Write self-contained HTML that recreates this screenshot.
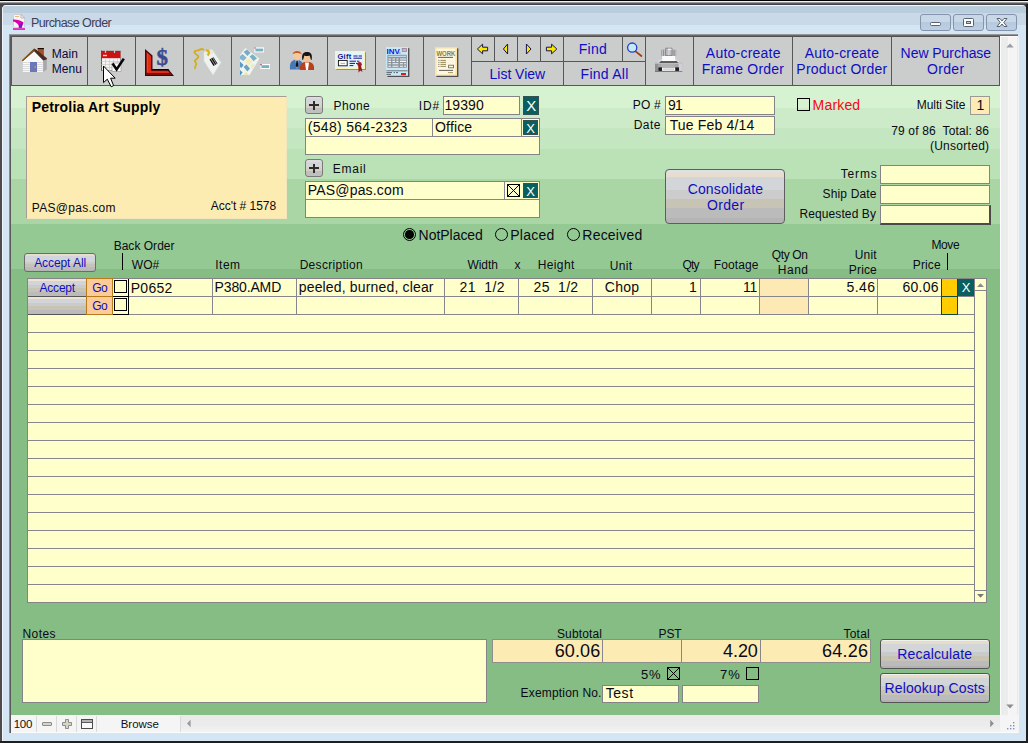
<!DOCTYPE html>
<html><head><meta charset="utf-8"><title>Purchase Order</title>
<style>
html,body{margin:0;padding:0}
html{background:#1f1f1f}
body{width:1028px;height:743px;position:relative;overflow:hidden;background:#1f1f1f;font-family:"Liberation Sans",sans-serif}
.t{position:absolute;line-height:20px;white-space:pre;font-family:"Liberation Sans",sans-serif}
.a{position:absolute;box-sizing:border-box}
.sep{position:absolute;width:1px;background:#565858;top:37px;height:48px}
.fld{position:absolute;box-sizing:border-box;border:1px solid #848488;background:#ffffcc}
.tan{background:#fdebb4}
.xb{position:absolute;box-sizing:border-box;background:#07605f;border:1px solid #35504f}
.ln{position:absolute;background:#86868c}
.btn{position:absolute;box-sizing:border-box;border:1px solid #5e5e5e;border-radius:4px}
.cb{position:absolute;box-sizing:border-box;border:1px solid #000;width:13px;height:13px}
.rad{position:absolute;box-sizing:border-box;border:1.15px solid #000;border-radius:50%;width:13px;height:13px}
svg{position:absolute;overflow:visible}

</style></head>
<body>
<!-- outer frame -->
<div class="a" style="left:0;top:0;width:1028px;height:1px;background:#000"></div>
<div class="a" style="left:0;top:1px;width:1028px;height:1px;background:#f2f2f2"></div>
<div class="a" style="left:0;top:2px;width:1028px;height:1px;background:#9a9a9a"></div>
<div class="a" style="left:0;top:3px;width:1028px;height:1px;background:#5c5c5c"></div>
<div class="a" style="left:0;top:4px;width:1028px;height:739px;background:#1f1f1f"></div>
<div class="a" style="left:0;top:4px;width:2px;height:737px;background:#4c4c4e"></div>
<div class="a" style="left:0;top:4px;width:1026px;height:2px;background:#444446"></div>
<div class="a" style="left:2px;top:5px;width:1024px;height:736px;background:#d4e5f3;border-radius:4px 4px 0 0;border-top:1px solid #f4f8fb;border-left:1px solid #eef4fa"></div>
<div class="a" style="left:1018px;top:37px;width:1px;height:696px;background:#f2f4f6"></div>
<div class="a" style="left:3px;top:6px;width:1023px;height:7px;background:#bacddd;border-radius:3px 3px 0 0"></div>
<div class="a" style="left:3px;top:13px;width:1023px;height:12px;background:#c9d9e8"></div>
<!-- title icon -->
<svg style="left:13px;top:14px" width="12" height="16" viewBox="0 0 12 16">
<path d="M0.5 0.5H8L11.5 4V13.6H0.5Z" fill="#f6f6f4" stroke="#d0d0d4" stroke-width="1"/>
<path d="M8 0.5V4H11.5Z" fill="#fff" stroke="#a4a4ac" stroke-width="0.8"/>
<path d="M2 2.5H6" stroke="#ecb878" stroke-width="1"/>
<path d="M0 5.6C4 5.4 8 6.6 10.6 8.4L8.6 13.8H5.8C6.4 10.4 3.4 8.2 0 7.4Z" fill="#dc00ac"/>
<path d="M6.2 10.2C7.4 10 9 9.4 9.8 8.6L8.6 13.8H5.8C6 12.6 6.4 11.4 6.2 10.2Z" fill="#7418cc"/>
<rect x="0" y="14.3" width="12" height="1.5" fill="#e400b4"/>
</svg>
<!-- window buttons -->
<div class="a" style="left:920px;top:14px;width:31px;height:17px;border:1px solid #8494ae;border-radius:3px;background:linear-gradient(#c9d8e8 0,#c9d8e8 45%,#b6cadf 46%,#bccfe2 100%)"></div>
<div class="a" style="left:953px;top:14px;width:31px;height:17px;border:1px solid #8494ae;border-radius:3px;background:linear-gradient(#c9d8e8 0,#c9d8e8 45%,#b6cadf 46%,#bccfe2 100%)"></div>
<div class="a" style="left:986px;top:14px;width:31px;height:17px;border:1px solid #8494ae;border-radius:3px;background:linear-gradient(#c9d8e8 0,#c9d8e8 45%,#b6cadf 46%,#bccfe2 100%)"></div>
<svg style="left:920px;top:14px" width="97" height="17" viewBox="0 0 97 17">
<rect x="10.5" y="8.5" width="10" height="3" rx="1" fill="#fdfdfd" stroke="#5a6270" stroke-width="1"/>
<rect x="43.5" y="4.5" width="10" height="8" rx="1" fill="#fdfdfd" stroke="#5a6270" stroke-width="1"/>
<rect x="46.5" y="7.5" width="4" height="2" fill="#c0d0e2" stroke="#5a6270" stroke-width="1"/>
<path d="M77 4.5H80L82 7L84 4.5H87L83.8 8.5L87 12.5H84L82 10L80 12.5H77L80.2 8.5Z" fill="#fdfdfd" stroke="#5a6270" stroke-width="1" stroke-linejoin="round"/>
</svg>
<!-- client top/left dark borders -->
<div class="a" style="left:9px;top:34px;width:1009px;height:1px;background:#9a9696"></div>
<div class="a" style="left:9px;top:35px;width:1009px;height:1px;background:#6a686a"></div>
<div class="a" style="left:9px;top:36px;width:1009px;height:1px;background:#505252"></div>
<div class="a" style="left:9px;top:35px;width:1px;height:698px;background:#8c8c8c"></div>
<div class="a" style="left:10px;top:36px;width:1px;height:697px;background:#5a5a5a"></div>
<!-- toolbar -->
<div class="a" style="left:11px;top:37px;width:989px;height:49px;background:#cbcdcc;border-left:1px solid #565858;border-right:1px solid #565858;border-bottom:1px solid #565858"></div>
<div class="sep" style="left:87px"></div><div class="sep" style="left:135px"></div><div class="sep" style="left:183px"></div>
<div class="sep" style="left:231px"></div><div class="sep" style="left:279px"></div><div class="sep" style="left:327px"></div>
<div class="sep" style="left:375px"></div><div class="sep" style="left:423px"></div><div class="sep" style="left:471px"></div>
<div class="sep" style="left:494px;height:24px"></div><div class="sep" style="left:517px;height:24px"></div><div class="sep" style="left:540px;height:24px"></div>
<div class="sep" style="left:563px"></div><div class="sep" style="left:622px;height:24px"></div><div class="sep" style="left:645px"></div>
<div class="sep" style="left:693px"></div><div class="sep" style="left:792px"></div><div class="sep" style="left:891px"></div>
<div class="a" style="left:471px;top:61px;width:175px;height:1px;background:#565858"></div>
<svg style="left:0;top:0" width="1028" height="100" viewBox="0 0 1028 100">
<!-- house -->
<g>
<rect x="37.7" y="48" width="6.2" height="9" fill="#a85228"/><rect x="37.7" y="48" width="6.2" height="1.2" fill="#1a0a08"/>
<path d="M22.9 60L34 50L43.2 60V72H22.9Z" fill="#f8f8f8"/>
<path d="M43.2 59L46.8 58V69.5L43.2 72Z" fill="#a8a8ac"/>
<path d="M23 62.5H43M23 64.5H43M23 66.5H43M23 68.5H43M23 70.5H43" stroke="#d4d4d8" stroke-width="0.8"/>
<rect x="30" y="62" width="7" height="10" fill="#6a78b8"/><rect x="34.6" y="66.3" width="1.2" height="1.2" fill="#d8c040"/>
<path d="M21.8 60.4L34.2 48.6L36 49.5L47.2 58.4L46.4 59.6L43.2 60.6L34.2 51.2L23.2 60.8Z" fill="#4a2a22"/>
<path d="M21.8 60.4L34.2 48.6L34.6 50L23 60.9Z" fill="#8a5a18"/>
</g>
<!-- calendar -->
<g>
<rect x="101.4" y="51" width="19" height="19.6" fill="#f4f4f4" stroke="#8c8c90" stroke-width="0.8"/><rect x="101" y="50.6" width="1" height="20" fill="#5c5c60"/>
<rect x="101.4" y="51" width="19" height="7.2" fill="#cc1212"/>
<rect x="103" y="54.8" width="4" height="1.4" fill="#f6d0d0"/>
<path d="M105.5 49.5V53M114.5 49.5V53" stroke="#c8c8cc" stroke-width="1.2"/>
<path d="M101.5 61.5H120M101.5 64.5H120M101.5 67.5H120M105.5 58.5V71M109.5 58.5V71M113.5 58.5V71M117.5 58.5V71" stroke="#d0ccc4" stroke-width="0.8"/>
<rect x="112" y="63" width="9" height="8.5" fill="#fbfbfb" stroke="#9a9aa0" stroke-width="0.7"/>
<path d="M112.6 63.6L116.6 69.4L123.8 58.6" fill="none" stroke="#080808" stroke-width="2.6"/>
</g>
<!-- frame corner & $ -->
<g>
<path d="M145 49L152.5 55.6V68.9H168.2L174 75.9H145Z" fill="#3c0814"/>
<path d="M146.5 51.8L151 56V70.6H167.8L170 73.2H146.5Z" fill="#e02c14"/>
<path d="M146.5 73.2H170.2L172.2 75H146.5Z" fill="#7c1010"/>
<path d="M152.5 69H168.2L169.6 70.6H151.2Z" fill="#0c0404"/>
<path d="M147.6 54V72" stroke="#f04828" stroke-width="1"/>
<text x="156.6" y="65.4" font-family="Liberation Serif" font-weight="700" font-size="23" fill="#3c4a8e" stroke="#3c4a8e" stroke-width="0.5">$</text>
</g>
<!-- tag -->
<g>
<path d="M204 52L212 49.5L221 62.5L213 75L204 61Z" fill="#f0f2f0" stroke="#d8e0e0" stroke-width="0.6"/>
<path d="M205 51.5L211.6 49.6L214 53L206.4 56Z" fill="#e8ecd0"/>
<path d="M206 50.5C209 50 210 53 207.6 55.5" fill="none" stroke="#d8b020" stroke-width="2.2"/>
<path d="M204 50.2C201.4 47 200 50.6 196.6 50.6C193 50.6 194.6 53.8 197 55C200 56.4 197.4 58.6 195.4 60C193.4 61.4 197.6 63 196 65C194.6 66.8 194.6 67.8 195.2 69" fill="none" stroke="#d4ac1c" stroke-width="1.8"/>
<path d="M209.5 59.5L213.5 57.2L217.5 63.6L213.5 66Z" fill="#101010"/>
<path d="M211 58.8L215 65.2M212.8 57.8L216.6 64.2" stroke="#f0f0f0" stroke-width="0.6"/>
</g>
<!-- mat samples -->
<g>
<path d="M245.4 48L259.4 58.6L249.6 75H240V55Z" fill="#f0f4ec"/>
<path d="M243.6 52L247 49.6L250.6 52.8L247.4 56Z" fill="#78acc4"/>
<path d="M240 56L242.6 54L246.6 57.8L243.4 61L240 59Z" fill="#88b4cc"/>
<path d="M249.6 56.4L252.6 54.2L257 58.2L253.6 61.2Z" fill="#78b0c8"/>
<path d="M244.6 61.6L248.6 58L252.6 61.6L248.6 65.4Z" fill="#f4ecb8"/>
<path d="M240 61.6L243.6 65L241.4 68L240 67Z" fill="#5c9cc8"/>
<path d="M243.6 67L246.4 64.6L250 68.6L247.4 71.4Z" fill="#6ca4c0"/>
<path d="M240 70L242.6 72.4L240.6 75H240Z" fill="#4c98c4"/>
<path d="M250.4 65.4L253 63.2L255.4 65.4L252 69.6Z" fill="#e8ecd0"/>
<path d="M243.4 74.8L246 72L248.8 74.8Z" fill="#f0e4a8"/>
<rect x="254.4" y="47.4" width="9.6" height="5" fill="#fff"/><rect x="255.4" y="48.6" width="7.8" height="2.8" fill="#78b0c4"/>
<rect x="260.4" y="64" width="9.6" height="5" fill="#fff"/><rect x="261.4" y="65.2" width="7.8" height="2.8" fill="#78b0c4"/>
<path d="M254.4 47.4h1.2v1.2h-1.2zM260.4 64h1.2v1.2h-1.2z" fill="#8c2048"/>
</g>
<!-- people -->
<g>
<path d="M290 69.4C289.4 63 291 60 296.6 59.4C302 60 303.4 63 303 69.4Z" fill="#4878b8"/>
<path d="M295.4 59.6L297 69.4L298.6 59.6Z" fill="#f4f4f4"/>
<path d="M296.4 60.4H297.8L298.2 66L297 67.4L295.8 66Z" fill="#101010"/>
<ellipse cx="297" cy="55" rx="4.2" ry="4.6" fill="#f4c8a0"/>
<path d="M292.6 54.4C292.4 50 301.4 49.6 301.6 54.4C300 52.4 294 52.4 292.6 54.4Z" fill="#c85a20"/>
<path d="M300 70C299.4 64.4 301.6 62 307 61.8C312.4 62 314.6 64.4 314 70Z" fill="#b8401c"/>
<path d="M305 62.4L306 70H308L309 62.4Z" fill="#fbfbfb"/>
<ellipse cx="307" cy="57.6" rx="3.4" ry="4" fill="#f4c090"/>
<path d="M302.4 60C301 53.4 304.4 52 307 52C309.8 52 313 53.4 311.6 60C310.4 60 310.6 56.4 309.4 55.4C307.4 56.2 305.4 56 304.4 55.4C303.6 56.6 303.8 60 302.4 60Z" fill="#141414"/>
</g>
<!-- gift certificate -->
<g>
<rect x="336.4" y="52.4" width="29.6" height="17.6" fill="#8c8c90"/>
<rect x="335" y="51" width="30" height="18" fill="#fbf4b8"/>
<rect x="336.2" y="52.2" width="27.6" height="15.6" fill="#e4f4fc"/>
<text x="337.4" y="58.8" font-family="Liberation Sans" font-weight="700" font-size="7.6" fill="#141490" letter-spacing="0.3">Gift</text>
<path d="M353.4 56H357.6M358.6 56H362M353.4 58.2H362M349.6 61.2H356M357 61.2H359.4M349.6 63.4H355M356 63.4H358M349.6 65.6H353.4" stroke="#141490" stroke-width="1"/>
<rect x="338.4" y="60.4" width="8.8" height="5.4" fill="#fbfbfb" stroke="#101010" stroke-width="0.9"/>
<path d="M340.6 63.4H345" stroke="#9a9a9a" stroke-width="0.8"/>
<circle cx="359.6" cy="64.2" r="2.2" fill="#a81c1c"/>
<path d="M358.2 65.6L358.6 72.8L360.2 70.4L362.4 72L361 65.6Z" fill="#981818"/>
</g>
<!-- INV -->
<g>
<rect x="387.4" y="48.2" width="22" height="28.8" fill="#505054"/>
<rect x="386" y="47" width="22" height="28.8" fill="#c8e8f6"/>
<text x="386.6" y="54.4" font-family="Liberation Sans" font-weight="700" font-size="8" fill="#1010e0">INV</text>
<path d="M398.4 53H400.6" stroke="#4858a8" stroke-width="0.8"/>
<rect x="402.2" y="48.4" width="4.4" height="3.2" fill="#f0a0c8" stroke="#80808c" stroke-width="0.7"/>
<rect x="387.4" y="54.8" width="19.4" height="13" fill="#8c949c"/>
<path d="M388.4 56.4H406" stroke="#c0d8e8" stroke-width="1.2"/>
<path d="M388.4 59H391M392.4 59H395M396.4 59H398.4M400 59H406M388.4 61.4H391M392.4 61.4H395M396.4 61.4H398.4M400 61.4H406M388.4 63.8H391M392.4 63.8H398.4M400 63.8H403M404 63.8H406M388.4 66.2H391M392.4 66.2H398.4M400 66.2H403M404 66.2H406" stroke="#f4f8fc" stroke-width="1.1"/>
<path d="M386.4 70.8H407.6" stroke="#50545c" stroke-width="0.8"/>
<path d="M386.4 72.6H392M393.6 72.6H395M396 72.6H398M386.4 74.4H391" stroke="#50545c" stroke-width="0.9"/>
<rect x="401" y="73" width="5" height="2.2" fill="#e81818"/>
</g>
<!-- WORK -->
<g>
<rect x="436.4" y="48.4" width="22" height="28.6" fill="#505054"/>
<rect x="435" y="47.2" width="22" height="28.6" fill="#fbe4a4"/>
<rect x="436.6" y="48.6" width="18.8" height="25.8" fill="#fdf6e0"/>
<text x="436.4" y="55.6" font-family="Liberation Sans" font-weight="700" font-size="7" fill="#8c7c38" textLength="19" lengthAdjust="spacingAndGlyphs">WORK</text>
<path d="M438 57.4H453" stroke="#50504c" stroke-width="0.9"/>
<path d="M440.4 60.4H446M440.4 62.4H446M440.4 64.4H446M440.4 66.4H446" stroke="#8c8048" stroke-width="0.9"/>
<path d="M438.4 60.4h1M438.4 62.4h1M438.4 64.4h1M438.4 66.4h1" stroke="#50504c" stroke-width="0.9"/>
<rect x="448.6" y="65.2" width="5" height="2.6" fill="#fdf6e0" stroke="#70684c" stroke-width="0.8"/>
<path d="M439 70.4H453" stroke="#50504c" stroke-width="0.9"/>
<path d="M448 72.6H453" stroke="#8c8048" stroke-width="0.8"/>
</g>
<!-- arrows -->
<g fill="#ffe800" stroke="#141450" stroke-width="1" stroke-linejoin="miter">
<path d="M477.4 49L482.6 44.2V47.2H487.6V50.8H482.6V53.8Z"/>
<path d="M503.4 49L507.6 44V54Z"/>
<path d="M531 49L526.4 44V54Z"/>
<path d="M556.8 49L551.6 44.2V47.2H546.4V50.8H551.6V53.8Z"/>
</g>
<!-- magnifier -->
<path d="M635.6 51.4L641.4 56" stroke="#a03c1c" stroke-width="1.8" stroke-linecap="round"/>
<circle cx="632.2" cy="47.6" r="4.6" fill="#c8e8f8" stroke="#2040c4" stroke-width="1.3"/>
<!-- printer -->
<g>
<rect x="661" y="49.8" width="15.3" height="6.4" fill="#a2a2a6"/>
<path d="M662.4 49.8V56.2M664.6 49.8V56.2M673 49.8V56.2M675.2 49.8V56.2" stroke="#d0d0d4" stroke-width="0.7"/>
<path d="M663.5 49.8V56.2M674.1 49.8V56.2" stroke="#8e8e92" stroke-width="0.9"/>
<rect x="665.8" y="48.1" width="6.2" height="7.6" fill="#bcbcc0" stroke="#6c6c70" stroke-width="0.6"/>
<rect x="668" y="48.7" width="3.4" height="1.3" fill="#f2f2f2"/>
<path d="M668.9 50V55.4" stroke="#e0e0e4" stroke-width="1"/>
<path d="M656.6 63.2L660.6 59.6H662.4V63.2Z" fill="#dcdce4"/>
<path d="M680.8 63.2L676.8 59.6H675V63.2Z" fill="#dcdce4"/>
<rect x="662.2" y="56" width="13" height="6" fill="#fbfbfb"/>
<path d="M658.8 63L660.8 61.2H676.6L678.6 63Z" fill="#2a2a2e"/>
<rect x="655" y="62.8" width="27.2" height="9" fill="#a6a6aa"/>
<rect x="655" y="62.8" width="27.2" height="1" fill="#c6c6ca"/>
<rect x="655" y="63.8" width="3" height="8" fill="#909094"/>
<rect x="678.6" y="63.8" width="3.6" height="8" fill="#d0d0d6"/>
<rect x="661" y="63.8" width="14" height="3.4" fill="#b2b0b4"/>
<rect x="658.4" y="67.4" width="20.6" height="3.5" fill="#1e1e22"/>
<rect x="662" y="67.4" width="13.2" height="3.5" fill="#f6f6f6"/>
<rect x="663.2" y="68.3" width="10.8" height="1.7" fill="#d6d6da"/>
<rect x="655" y="71" width="27.2" height="0.8" fill="#707074"/>
</g>
</svg>

<!-- vertical scrollbar -->
<div class="a" style="left:1000px;top:36px;width:18px;height:679px;background:linear-gradient(90deg,#fcfcfc 0,#fcfcfc 1px,#ebecec 1px,#ebecec 8px,#f7f7f7 8px,#f7f7f7 9px,#f4f4f4 9px,#f4f4f4 17px,#e9e9e9 17px)"></div>
<div class="a" style="left:1000px;top:36px;width:18px;height:1px;background:#fbfbfb"></div>
<svg style="left:1005.8px;top:42.5px" width="8" height="5" viewBox="0 0 8 5"><path d="M0.3 4.6L4 0.6L7.7 4.6Z" fill="#9c9ca2"/></svg>
<svg style="left:1006px;top:704px" width="8" height="5" viewBox="0 0 8 5"><path d="M0.3 0.4L4 4.4L7.7 0.4Z" fill="#8c8c92"/></svg>
<!-- status bar -->
<div class="a" style="left:11px;top:715px;width:1007px;height:18px;background:#f5f5f5;border-bottom:1px solid #fcfcfc"></div>
<div class="a" style="left:181px;top:715px;width:819px;height:17px;background:linear-gradient(#e9e9e9,#ececec 60%,#f3f3f3)"></div>
<div class="a" style="left:36px;top:716px;width:1px;height:16px;background:#d9d9d9"></div>
<div class="a" style="left:56px;top:716px;width:1px;height:16px;background:#d9d9d9"></div>
<div class="a" style="left:76px;top:716px;width:1px;height:16px;background:#d9d9d9"></div>
<div class="a" style="left:96px;top:716px;width:1px;height:16px;background:#d9d9d9"></div>
<div class="a" style="left:180px;top:716px;width:1px;height:16px;background:#d9d9d9"></div>
<div class="a" style="left:42px;top:722px;width:10px;height:4px;background:#d8d4c4;border:1px solid #8c8c8c;border-radius:1px"></div>
<svg style="left:62px;top:719px" width="10" height="10" viewBox="0 0 10 10"><path d="M3.5 0.5H6.5V3.5H9.5V6.5H6.5V9.5H3.5V6.5H0.5V3.5H3.5Z" fill="#d8d4c4" stroke="#8c8c8c"/></svg>
<div class="a" style="left:81px;top:719px;width:12px;height:10px;background:#fafafa;border:1px solid #4c4c4c"></div>
<div class="a" style="left:82px;top:720px;width:10px;height:2px;background:#b4b4b4"></div>
<div class="a" style="left:82px;top:722px;width:10px;height:1px;background:#5c5c5c"></div>
<svg style="left:186px;top:719px" width="6" height="9" viewBox="0 0 6 9"><path d="M4.6 0.8V8.2L1 4.5Z" fill="#9a9aa0"/></svg>
<svg style="left:989px;top:719px" width="6" height="9" viewBox="0 0 6 9"><path d="M1.2 0.8V8.2L4.8 4.5Z" fill="#8c8c92"/></svg>
<svg style="left:1006px;top:721px" width="10" height="10" viewBox="0 0 10 10" fill="#8c8cc0"><rect x="7" y="1" width="1.4" height="1.4"/><rect x="4" y="4" width="1.4" height="1.4"/><rect x="7" y="4" width="1.4" height="1.4"/><rect x="1" y="7" width="1.4" height="1.4"/><rect x="4" y="7" width="1.4" height="1.4"/><rect x="7" y="7" width="1.4" height="1.4"/></svg>
<!-- green area -->
<div class="a" style="left:11px;top:86px;width:989px;height:629px;background:linear-gradient(#d7f2d1 0,#d7f2d1 22px,#cdebc8 22px,#cdebc8 42px,#c4e6c0 42px,#c4e6c0 63px,#bbe1b7 63px,#bbe1b7 93px,#aad6a6 93px,#aad6a6 138px,#95c994 138px,#95c994 183px,#85bd85 183px,#85bd85 100%)"></div>
<!-- customer box -->
<div class="a" style="left:26px;top:96px;width:261px;height:123px;background:#fdecb1;border:1px solid #a89c94;border-right-color:#f3e6bc;border-bottom-color:#f3e6bc"></div>
<!-- plus buttons -->
<div class="btn" style="left:305px;top:96px;width:18px;height:18px;border-color:#7a7a7a;border-radius:3px;background:linear-gradient(#dcdcdc 0,#dcdcdc 2px,#d3d6d8 2px,#d3d6d8 8px,#d6cfc0 8px,#d6cfc0 11px,#bfbfbf 11px)"></div>
<div class="a" style="left:309px;top:104px;width:10px;height:2px;background:#2c2c2c"></div>
<div class="a" style="left:313px;top:100.5px;width:2px;height:9px;background:#2c2c2c"></div>
<div class="btn" style="left:305px;top:159px;width:18px;height:18px;border-color:#7a7a7a;border-radius:3px;background:linear-gradient(#dcdcdc 0,#dcdcdc 2px,#d3d6d8 2px,#d3d6d8 8px,#d6cfc0 8px,#d6cfc0 11px,#bfbfbf 11px)"></div>
<div class="a" style="left:309px;top:167px;width:10px;height:2px;background:#2c2c2c"></div>
<div class="a" style="left:313px;top:163.5px;width:2px;height:9px;background:#2c2c2c"></div>
<!-- ID field -->
<div class="fld" style="left:443px;top:96px;width:77px;height:19px"></div>
<div class="xb" style="left:523px;top:96px;width:16px;height:19px"></div>
<!-- phone box -->
<div class="fld" style="left:305px;top:118px;width:235px;height:37px"></div>
<div class="ln" style="left:306px;top:136px;width:233px;height:1px"></div>
<div class="ln" style="left:432px;top:119px;width:1px;height:17px"></div>
<div class="ln" style="left:521px;top:119px;width:1px;height:17px"></div>
<div class="xb" style="left:523px;top:120px;width:15px;height:15px"></div>
<!-- email box -->
<div class="fld" style="left:305px;top:181px;width:235px;height:37px"></div>
<div class="ln" style="left:306px;top:199px;width:233px;height:1px"></div>
<div class="ln" style="left:504px;top:182px;width:1px;height:17px"></div>
<div class="cb" style="left:507px;top:184px"></div>
<svg style="left:507px;top:184px" width="13" height="13" viewBox="0 0 13 13"><path d="M1 1L12 12M12 1L1 12" stroke="#000" stroke-width="1"/></svg>
<div class="xb" style="left:523px;top:183px;width:15px;height:15px"></div>
<!-- PO / Date -->
<div class="fld" style="left:665px;top:96px;width:110px;height:19px"></div>
<div class="fld" style="left:665px;top:116px;width:110px;height:19px"></div>
<div class="cb" style="left:797px;top:98px"></div>
<div class="fld tan" style="left:970px;top:96px;width:20px;height:19px;border-color:#9a9a98"></div>
<!-- consolidate -->
<div class="btn" style="left:665px;top:169px;width:120px;height:55px;background:linear-gradient(#e0e0e0 0,#e0e0e0 3px,#e8dccd 3px,#e8dccd 7px,#d2d6d9 7px,#d2d6d9 20px,#cccccc 20px,#cccccc 29px,#c8c4b5 29px,#c8c4b5 38px,#bbbbbb 38px,#bbbbbb 48px,#b4b4b4 48px,#b4b4b4 100%)"></div>
<!-- terms -->
<div class="fld" style="left:880px;top:165px;width:110px;height:19px"></div>
<div class="fld" style="left:880px;top:185px;width:110px;height:19px"></div>
<div class="fld" style="left:880px;top:205px;width:111px;height:20px;border-right:2px solid #4a4a4a;border-bottom:2px solid #4a4a4a"></div>
<!-- radios -->
<div class="rad" style="left:403px;top:228px"></div><div class="a" style="left:405.2px;top:230.2px;width:8.6px;height:8.6px;border-radius:50%;background:#050505"></div>
<div class="rad" style="left:495px;top:228px"></div>
<div class="rad" style="left:567px;top:228px"></div>
<!-- accept all -->
<div class="btn" style="left:24px;top:253px;width:72px;height:19px;border-radius:3px;border-color:#6c6c6c;background:linear-gradient(#e4ddd0 0,#e4ddd0 2px,#d2d6da 2px,#d2d6da 8px,#cccccc 8px,#cccccc 10px,#c8c4b5 10px,#c8c4b5 13px,#bbbbbb 13px,#bbbbbb 16px,#b4b4b4 16px)"></div>
<div class="a" style="left:122px;top:253px;width:1px;height:17px;background:#000"></div>
<div class="a" style="left:947px;top:253px;width:1px;height:17px;background:#000"></div>
<!-- table -->
<div class="fld" style="left:27px;top:278px;width:948px;height:325px;background:#ffffcc repeating-linear-gradient(#ffffcc 0,#ffffcc 17px,#86868c 17px,#86868c 18px)"></div>
<div class="a" style="left:760px;top:279px;width:48px;height:35px;background:#fde9b3"></div>
<div class="ln" style="left:760px;top:296px;width:48px;height:1px"></div>
<div class="ln" style="left:212px;top:279px;width:1px;height:35px"></div>
<div class="ln" style="left:296px;top:279px;width:1px;height:35px"></div>
<div class="ln" style="left:444px;top:279px;width:1px;height:35px"></div>
<div class="ln" style="left:518px;top:279px;width:1px;height:35px"></div>
<div class="ln" style="left:592px;top:279px;width:1px;height:35px"></div>
<div class="ln" style="left:651px;top:279px;width:1px;height:35px"></div>
<div class="ln" style="left:700px;top:279px;width:1px;height:35px"></div>
<div class="ln" style="left:759px;top:279px;width:1px;height:35px"></div>
<div class="ln" style="left:808px;top:279px;width:1px;height:35px"></div>
<div class="ln" style="left:877px;top:279px;width:1px;height:35px"></div>
<!-- accept buttons -->
<div class="a" style="left:28px;top:279px;width:58px;height:17px;background:linear-gradient(#efe3d3 0,#efe3d3 2px,#d1d5d9 2px,#d1d5d9 6px,#cbcbcb 6px,#cbcbcb 9px,#c8c4b5 9px,#c8c4b5 13px,#bbbbbb 13px)"></div>
<div class="a" style="left:28px;top:297px;width:58px;height:17px;background:linear-gradient(#efe3d3 0,#efe3d3 2px,#d1d5d9 2px,#d1d5d9 6px,#cbcbcb 6px,#cbcbcb 9px,#c8c4b5 9px,#c8c4b5 13px,#bbbbbb 13px)"></div>
<div class="a" style="left:28px;top:296px;width:58px;height:1px;background:#565656"></div>
<div class="a" style="left:28px;top:314px;width:58px;height:1px;background:#565656"></div>
<!-- go cells -->
<div class="a" style="left:86px;top:278px;width:27px;height:19px;background:#fdcb98;border:1px solid #b87a1a"></div>
<div class="a" style="left:86px;top:296px;width:27px;height:19px;background:#fdcb98;border:1px solid #b87a1a"></div>
<!-- checkbox cells -->
<div class="a" style="left:113px;top:296px;width:16px;height:1px;background:#000"></div>
<div class="a" style="left:113px;top:314px;width:16px;height:1px;background:#000"></div>
<div class="a" style="left:128px;top:279px;width:1px;height:36px;background:#000"></div>
<div class="cb" style="left:114px;top:280px"></div>
<div class="cb" style="left:114px;top:298px"></div>
<!-- move cells -->
<div class="a" style="left:941px;top:279px;width:17px;height:18px;background:#ffcc00;border:1px solid #0d4a3c;border-top:none"></div>
<div class="a" style="left:941px;top:297px;width:17px;height:18px;background:#ffcc00;border:1px solid #0d4a3c;border-top:none"></div>
<div class="xb" style="left:958px;top:279px;width:16px;height:17px;border:none"></div>
<!-- table scrollbar -->
<div class="fld" style="left:974px;top:278px;width:13px;height:325px"></div>
<div class="ln" style="left:975px;top:290px;width:11px;height:1px"></div>
<div class="ln" style="left:975px;top:590px;width:11px;height:1px"></div>
<svg style="left:977px;top:283px" width="7" height="4" viewBox="0 0 7 4"><path d="M0 4L3.5 0.3L7 4Z" fill="#8c8c90"/></svg>
<svg style="left:977px;top:594px" width="7" height="4" viewBox="0 0 7 4"><path d="M0 0L3.5 3.7L7 0Z" fill="#77777c"/></svg>
<!-- notes -->
<div class="fld" style="left:22px;top:639px;width:465px;height:64px"></div>
<!-- totals -->
<div class="fld tan" style="left:492px;top:639px;width:379px;height:24px;border-color:#8e8e8e"></div>
<div class="ln" style="left:602px;top:640px;width:1px;height:22px"></div>
<div class="ln" style="left:681px;top:640px;width:1px;height:22px"></div>
<div class="ln" style="left:760px;top:640px;width:1px;height:22px"></div>
<div class="cb" style="left:667px;top:667px"></div>
<svg style="left:667px;top:667px" width="13" height="13" viewBox="0 0 13 13"><path d="M1 1L12 12M12 1L1 12" stroke="#000" stroke-width="1"/></svg>
<div class="cb" style="left:746px;top:667px"></div>
<div class="fld" style="left:602px;top:685px;width:77px;height:18px"></div>
<div class="fld" style="left:682px;top:685px;width:77px;height:18px"></div>
<div class="btn" style="left:880px;top:639px;width:110px;height:30px;border-radius:3px;border-color:#545454;background:linear-gradient(#f0f0f0 0,#f0f0f0 1px,#e8dcc9 1px,#e8dcc9 4px,#d2d6d9 4px,#d2d6d9 12px,#cacaca 12px,#cacaca 16px,#c8c4b5 16px,#c8c4b5 21px,#bbbbbb 21px,#bbbbbb 26px,#b2b2b2 26px,#b2b2b2 100%)"></div>
<div class="btn" style="left:880px;top:673px;width:110px;height:30px;border-radius:3px;border-color:#545454;background:linear-gradient(#f0f0f0 0,#f0f0f0 1px,#e8dcc9 1px,#e8dcc9 4px,#d2d6d9 4px,#d2d6d9 12px,#cacaca 12px,#cacaca 16px,#c8c4b5 16px,#c8c4b5 21px,#bbbbbb 21px,#bbbbbb 26px,#b2b2b2 26px,#b2b2b2 100%)"></div>

<!-- mouse cursor -->
<svg style="left:0;top:0" width="130" height="100" viewBox="0 0 130 100"><path d="M103.5 66V82.6L107.3 79.2L111.2 86.8L113.6 85.6L110.6 78.2H115.2Z" fill="#fff" stroke="#000" stroke-width="1" stroke-linejoin="miter"/></svg>


<span class="t" style="left:30.97px;top:13px;font-size:12.5px;color:#3c4258;letter-spacing:-0.58px;">Purchase Order</span>
<span class="t" style="left:51.66px;top:44px;font-size:12px;color:#08083c;letter-spacing:0.06px;">Main</span>
<span class="t" style="left:51.66px;top:59px;font-size:12px;color:#08083c;letter-spacing:0.09px;">Menu</span>
<span class="t" style="left:489.61px;top:64px;font-size:14px;color:#0e0ec2;letter-spacing:-0.04px;">List View</span>
<span class="t" style="left:578.70px;top:39px;font-size:14px;color:#0e0ec2;letter-spacing:0.30px;">Find</span>
<span class="t" style="left:580.60px;top:64px;font-size:14px;color:#0e0ec2;letter-spacing:0.26px;">Find All</span>
<span class="t" style="left:705.84px;top:43px;font-size:14px;color:#0e0ec2;letter-spacing:0.23px;">Auto-create</span>
<span class="t" style="left:701.78px;top:59px;font-size:14px;color:#0e0ec2;letter-spacing:0.20px;">Frame Order</span>
<span class="t" style="left:804.77px;top:43px;font-size:14px;color:#0e0ec2;letter-spacing:0.18px;">Auto-create</span>
<span class="t" style="left:796.34px;top:59px;font-size:14px;color:#0e0ec2;letter-spacing:0.24px;">Product Order</span>
<span class="t" style="left:900.62px;top:43px;font-size:14px;color:#0e0ec2;letter-spacing:-0.05px;">New Purchase</span>
<span class="t" style="left:927.07px;top:59px;font-size:14px;color:#0e0ec2;letter-spacing:0.30px;">Order</span>
<span class="t" style="left:31.67px;top:97px;font-size:14px;color:#000;font-weight:700;letter-spacing:0.18px;">Petrolia Art Supply</span>
<span class="t" style="left:31.86px;top:198px;font-size:12px;color:#0a0a14;letter-spacing:0.29px;">PAS@pas.com</span>
<span class="t" style="left:210.69px;top:196px;font-size:12px;color:#0a0a14;letter-spacing:-0.02px;">Acc't # 1578</span>
<span class="t" style="left:333.56px;top:96px;font-size:12px;color:#0a0a14;letter-spacing:0.33px;">Phone</span>
<span class="t" style="left:418.79px;top:96px;font-size:12px;color:#0a0a14;letter-spacing:0.90px;">ID#</span>
<span class="t" style="left:444.44px;top:95px;font-size:14px;color:#0a0a14;letter-spacing:0.08px;">19390</span>
<span class="t" style="left:307.77px;top:117px;font-size:14px;color:#0a0a14;letter-spacing:0.30px;">(548) 564-2323</span>
<span class="t" style="left:435.07px;top:117px;font-size:14px;color:#0a0a14;letter-spacing:0.15px;">Office</span>
<span class="t" style="left:332.86px;top:159px;font-size:12px;color:#0a0a14;letter-spacing:0.71px;">Email</span>
<span class="t" style="left:307.82px;top:180px;font-size:14px;color:#0a0a14;letter-spacing:0.17px;">PAS@pas.com</span>
<span class="t" style="left:632.82px;top:95px;font-size:12px;color:#0a0a14;letter-spacing:0.15px;">PO #</span>
<span class="t" style="left:633.66px;top:115px;font-size:12px;color:#0a0a14;letter-spacing:0.47px;">Date</span>
<span class="t" style="left:667.99px;top:95px;font-size:14px;color:#0a0a14;letter-spacing:-0.80px;">91</span>
<span class="t" style="left:669.68px;top:115px;font-size:14px;color:#0a0a14;letter-spacing:0.17px;">Tue Feb 4/14</span>
<span class="t" style="left:812.60px;top:95px;font-size:14px;color:#f40814;letter-spacing:0.17px;">Marked</span>
<span class="t" style="left:916.86px;top:95px;font-size:12px;color:#0a0a14;letter-spacing:-0.08px;">Multi Site</span>
<span class="t" style="left:976.59px;top:95px;font-size:14px;color:#0a0a14;">1</span>
<span class="t" style="left:891.28px;top:121px;font-size:12px;color:#0a0a14;letter-spacing:0.14px;">79 of 86  Total: 86</span>
<span class="t" style="left:929.88px;top:136px;font-size:12px;color:#0a0a14;letter-spacing:0.28px;">(Unsorted)</span>
<span class="t" style="left:687.64px;top:179px;font-size:14px;color:#0e0ec2;letter-spacing:0.15px;">Consolidate</span>
<span class="t" style="left:707.07px;top:195px;font-size:14px;color:#0e0ec2;letter-spacing:0.30px;">Order</span>
<span class="t" style="left:840.82px;top:164px;font-size:12px;color:#0a0a14;letter-spacing:0.80px;">Terms</span>
<span class="t" style="left:822.57px;top:184px;font-size:12px;color:#0a0a14;letter-spacing:0.15px;">Ship Date</span>
<span class="t" style="left:799.40px;top:204px;font-size:12px;color:#0a0a14;letter-spacing:0.11px;">Requested By</span>
<span class="t" style="left:418.62px;top:225px;font-size:14px;color:#0a0a14;letter-spacing:-0.04px;">NotPlaced</span>
<span class="t" style="left:510.31px;top:225px;font-size:14px;color:#0a0a14;letter-spacing:0.22px;">Placed</span>
<span class="t" style="left:582.34px;top:225px;font-size:14px;color:#0a0a14;letter-spacing:0.21px;">Received</span>
<span class="t" style="left:113.66px;top:236px;font-size:12px;color:#0a0a14;letter-spacing:0.02px;">Back Order</span>
<span class="t" style="left:131.77px;top:255px;font-size:12px;color:#0a0a14;letter-spacing:0.09px;">WO#</span>
<span class="t" style="left:215.37px;top:255px;font-size:12px;color:#0a0a14;letter-spacing:0.43px;">Item</span>
<span class="t" style="left:299.66px;top:255px;font-size:12px;color:#0a0a14;letter-spacing:0.30px;">Description</span>
<span class="t" style="left:467.56px;top:255px;font-size:12px;color:#0a0a14;letter-spacing:-0.10px;">Width</span>
<span class="t" style="left:514.40px;top:255px;font-size:12px;color:#0a0a14;">x</span>
<span class="t" style="left:537.66px;top:255px;font-size:12px;color:#0a0a14;letter-spacing:0.39px;">Height</span>
<span class="t" style="left:609.78px;top:256px;font-size:12px;color:#0a0a14;letter-spacing:0.29px;">Unit</span>
<span class="t" style="left:682.51px;top:255px;font-size:12px;color:#0a0a14;letter-spacing:-0.79px;">Qty</span>
<span class="t" style="left:713.82px;top:255px;font-size:12px;color:#0a0a14;letter-spacing:0.09px;">Footage</span>
<span class="t" style="left:771.85px;top:245px;font-size:12px;color:#0a0a14;letter-spacing:-0.37px;">Qty On</span>
<span class="t" style="left:777.86px;top:260px;font-size:12px;color:#0a0a14;letter-spacing:0.48px;">Hand</span>
<span class="t" style="left:854.78px;top:245px;font-size:12px;color:#0a0a14;letter-spacing:0.16px;">Unit</span>
<span class="t" style="left:848.86px;top:260px;font-size:12px;color:#0a0a14;letter-spacing:0.14px;">Price</span>
<span class="t" style="left:931.43px;top:235px;font-size:12px;color:#0a0a14;letter-spacing:-0.38px;">Move</span>
<span class="t" style="left:912.86px;top:255px;font-size:12px;color:#0a0a14;letter-spacing:0.11px;">Price</span>
<span class="t" style="left:34.17px;top:253px;font-size:12px;color:#0e0ec2;letter-spacing:-0.08px;">Accept All</span>
<span class="t" style="left:39.46px;top:278px;font-size:12px;color:#0e0ec2;letter-spacing:-0.19px;">Accept</span>
<span class="t" style="left:92.36px;top:278px;font-size:12px;color:#0e0ec2;letter-spacing:-0.80px;">Go</span>
<span class="t" style="left:92.36px;top:296px;font-size:12px;color:#0e0ec2;letter-spacing:-0.80px;">Go</span>
<span class="t" style="left:130.70px;top:278px;font-size:14px;color:#0a0a14;letter-spacing:0.30px;">P0652</span>
<span class="t" style="left:214.60px;top:277px;font-size:14px;color:#0a0a14;letter-spacing:-0.15px;">P380.AMD</span>
<span class="t" style="left:298.75px;top:277px;font-size:14px;color:#0a0a14;letter-spacing:0.16px;">peeled, burned, clear</span>
<span class="t" style="left:459.61px;top:277px;font-size:14px;color:#0a0a14;letter-spacing:0.34px;">21  1/2</span>
<span class="t" style="left:533.62px;top:277px;font-size:14px;color:#0a0a14;letter-spacing:0.28px;">25  1/2</span>
<span class="t" style="left:604.81px;top:277px;font-size:14px;color:#0a0a14;letter-spacing:0.27px;">Chop</span>
<span class="t" style="left:689.04px;top:277px;font-size:14px;color:#0a0a14;">1</span>
<span class="t" style="left:742.89px;top:277px;font-size:14px;color:#0a0a14;">11</span>
<span class="t" style="left:846.53px;top:277px;font-size:14px;color:#0a0a14;letter-spacing:0.39px;">5.46</span>
<span class="t" style="left:902.39px;top:277px;font-size:14px;color:#0a0a14;letter-spacing:0.31px;">60.06</span>
<span class="t" style="left:22.40px;top:624px;font-size:12px;color:#0a0a14;letter-spacing:0.47px;">Notes</span>
<span class="t" style="left:556.95px;top:624px;font-size:12px;color:#0a0a14;letter-spacing:0.15px;">Subtotal</span>
<span class="t" style="left:658.56px;top:624px;font-size:12px;color:#0a0a14;letter-spacing:-0.11px;">PST</span>
<span class="t" style="left:843.44px;top:624px;font-size:12px;color:#0a0a14;letter-spacing:0.24px;">Total</span>
<span class="t" style="left:554.67px;top:641px;font-size:18px;color:#0a0a14;letter-spacing:0.13px;">60.06</span>
<span class="t" style="left:723.10px;top:641px;font-size:18px;color:#0a0a14;letter-spacing:-0.09px;">4.20</span>
<span class="t" style="left:822.09px;top:641px;font-size:18px;color:#0a0a14;letter-spacing:0.22px;">64.26</span>
<span class="t" style="left:640.88px;top:665px;font-size:13px;color:#0a0a14;letter-spacing:0.90px;">5%</span>
<span class="t" style="left:720.08px;top:665px;font-size:13px;color:#0a0a14;letter-spacing:0.90px;">7%</span>
<span class="t" style="left:520.56px;top:683px;font-size:12px;color:#0a0a14;letter-spacing:0.18px;">Exemption No.</span>
<span class="t" style="left:605.67px;top:683px;font-size:14px;color:#0a0a14;letter-spacing:0.57px;">Test</span>
<span class="t" style="left:897.31px;top:644px;font-size:14px;color:#0e0ec2;letter-spacing:0.17px;">Recalculate</span>
<span class="t" style="left:884.60px;top:678px;font-size:14px;color:#0e0ec2;letter-spacing:0.11px;">Relookup Costs</span>
<span class="t" style="left:13.70px;top:714px;font-size:11.5px;color:#111;letter-spacing:-0.29px;">100</span>
<span class="t" style="left:120.67px;top:714px;font-size:11.5px;color:#111;">Browse</span>
<span class="t" style="left:526.37px;top:96px;font-size:15px;color:#fff;">X</span>
<span class="t" style="left:526.20px;top:119px;font-size:13px;color:#fff;">X</span>
<span class="t" style="left:526.33px;top:182px;font-size:13px;color:#fff;">X</span>
<span class="t" style="left:961.82px;top:278px;font-size:13px;color:#fff;">X</span>
</body></html>
